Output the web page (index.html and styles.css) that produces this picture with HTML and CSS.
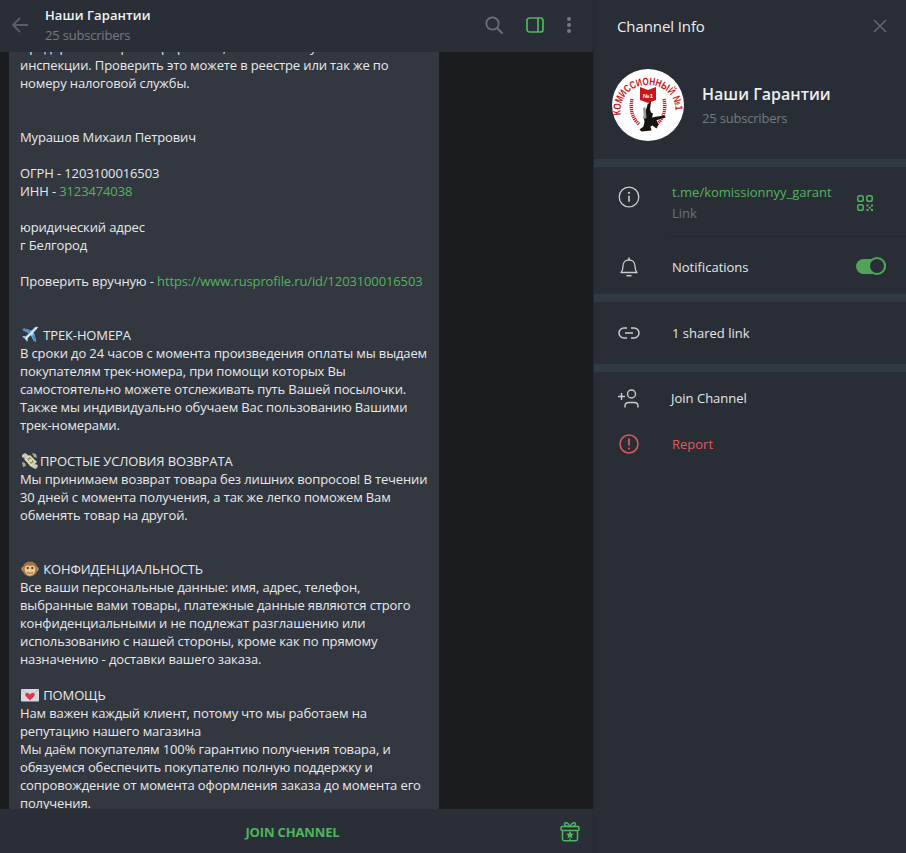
FILE: index.html
```html
<!DOCTYPE html>
<html lang="ru">
<head>
<meta charset="utf-8">
<title>Наши Гарантии</title>
<link rel="stylesheet" href="styles.css">
</head>
<body>
<div class="app">
  <main class="chat">
    <header class="chat-head">
      <svg class="back" width="20" height="20" viewBox="0 0 20 20"><path d="M18 10H3M10 3l-7 7 7 7" fill="none" stroke="#5a5f66" stroke-width="1.8"/></svg>
      <div class="chat-title">
        <div class="name">Наши Гарантии</div>
        <div class="subs">25 subscribers</div>
      </div>
      <div class="head-tools">
        <svg width="20" height="20" viewBox="0 0 20 20"><circle cx="8.5" cy="8.5" r="6.2" fill="none" stroke="#6f7379" stroke-width="1.7"/><path d="M13 13l5.5 5.5" stroke="#6f7379" stroke-width="1.8"/></svg>
        <svg width="18" height="16" viewBox="0 0 18 16"><rect x="1" y="1" width="16" height="14" rx="2.5" fill="none" stroke="#52b45f" stroke-width="1.7"/><path d="M12 1v14" stroke="#52b45f" stroke-width="1.7"/></svg>
        <svg width="6" height="18" viewBox="0 0 6 18"><circle cx="3" cy="3" r="2" fill="#767a80"/><circle cx="3" cy="9" r="2" fill="#767a80"/><circle cx="3" cy="15" r="2" fill="#767a80"/></svg>
      </div>
    </header>
    <div class="messages">
      <article class="bubble">
        Предприятие зарегистрировано, и состоит на учёте в налоговой<br>
        инспекции. Проверить это можете в реестре или так же по<br>
        номеру налоговой службы.<br>
        <br>
        <br>
        Мурашов Михаил Петрович<br>
        <br>
        ОГРН - 1203100016503<br>
        ИНН - <span class="link">3123474038</span><br>
        <br>
        юридический адрес<br>
        г Белгород<br>
        <br>
        Проверить вручную - <span class="link">https://www.rusprofile.ru/id/1203100016503</span><br>
        <br>
        <br>
        <svg class="emoji" viewBox="0 0 18 18"><path d="M16.6 1.2c-1-.8-2.4-.4-3.3.5L10.6 4.4 2.9 2.6 1.6 3.9 7.9 7.2 4.8 10.3 2.2 10 1.2 11l3 1.7 1.7 3 1-1-.3-2.6 3.1-3.1 3.3 6.3 1.3-1.3-1.8-7.7 2.7-2.7c.9-.9 1.2-2.3.4-3.4z" fill="#9fd0f2"/><path d="M16.6 1.2 4.5 13.3" stroke="#e9f5fc" stroke-width="1.2"/><path d="M10.6 4.4 2.9 2.6 1.6 3.9 7.9 7.2zM10.8 10.1l3.3 6.3 1.3-1.3-1.8-7.7z" fill="#4e90c4"/></svg> ТРЕК-НОМЕРА<br>
        В сроки до 24 часов с момента произведения оплаты мы выдаем<br>
        покупателям трек-номера, при помощи которых Вы<br>
        самостоятельно можете отслеживать путь Вашей посылочки.<br>
        Также мы индивидуально обучаем Вас пользованию Вашими<br>
        трек-номерами.<br>
        <br>
        <svg class="emoji" viewBox="0 0 18 18"><path d="M1 3l3-2 3 2 2 2-3 2-3-1-2-1zM17 14l-2 3-3-1-2-2 3-2 3 .5z" fill="#c9c9bb"/><path d="M3 7l6-4 7 7-6 5z" fill="#dcd8b4"/><path d="M6 7l3-2 4 5-3 2z" fill="#8f9a63"/><circle cx="9.500" cy="8.500" r="1.500" fill="#e8e4c4"/><path d="M1 10l3 1 1 3-3 1zM11 1l4 1 1 4-3-1z" fill="#a9a998"/></svg>ПРОСТЫЕ УСЛОВИЯ ВОЗВРАТА<br>
        Мы принимаем возврат товара без лишних вопросов! В течении<br>
        30 дней с момента получения, а так же легко поможем Вам<br>
        обменять товар на другой.<br>
        <br>
        <br>
        <svg class="emoji" viewBox="0 0 18 18"><circle cx="2.600" cy="9" r="2.200" fill="#d9a470"/><circle cx="15.400" cy="9" r="2.200" fill="#d9a470"/><circle cx="9" cy="9" r="7.600" fill="#a9713f"/><path d="M3.600 9c0-3 2-3.600 3-3.600.9 0 1.600.5 2.400.5s1.500-.5 2.400-.5c1 0 3 .6 3 3.600 0 4-3 6.500-5.400 6.500S3.600 13 3.600 9z" fill="#edc793"/><circle cx="6.700" cy="8" r="1.100" fill="#3a2515"/><circle cx="11.300" cy="8" r="1.100" fill="#3a2515"/><path d="M6 12.500c2 1 4 1 6 0" stroke="#8a5a32" fill="none"/></svg> КОНФИДЕНЦИАЛЬНОСТЬ<br>
        Все ваши персональные данные: имя, адрес, телефон,<br>
        выбранные вами товары, платежные данные являются строго<br>
        конфиденциальными и не подлежат разглашению или<br>
        использованию с нашей стороны, кроме как по прямому<br>
        назначению - доставки вашего заказа.<br>
        <br>
        <svg class="emoji" viewBox="0 0 18 18"><rect y="3" width="18" height="12.500" rx="1" fill="#d5d8de"/><path d="M0 3.500 9 10l9-6.500" fill="none" stroke="#aeb3bb" stroke-width=".8"/><path d="M9 14.500 4.800 10.200c-1.700-2 .9-4.700 2.800-3L9 8.400l1.400-1.200c1.900-1.700 4.500 1 2.800 3z" fill="#e0364a"/></svg> ПОМОЩЬ<br>
        Нам важен каждый клиент, потому что мы работаем на<br>
        репутацию нашего магазина<br>
        Мы даём покупателям 100% гарантию получения товара, и<br>
        обязуемся обеспечить покупателю полную поддержку и<br>
        сопровождение от момента оформления заказа до момента его<br>
        получения.
      </article>
    </div>
    <footer class="composer">
      <span class="join">JOIN CHANNEL</span>
      <svg class="gift" width="20" height="21" viewBox="0 0 20 21"><g fill="none" stroke="#52b45f" stroke-width="1.500"><rect x="1" y="5.500" width="18" height="4" rx="1.200"/><path d="M2.500 9.500v8.500a1.700 1.700 0 0 0 1.700 1.700h11.600a1.700 1.700 0 0 0 1.700-1.700V9.500"/><path d="M10 5.500C8 1 4.500 .8 4.500 3.200 4.500 5 7.500 5.500 10 5.500zM10 5.500c2-4.500 5.500-4.700 5.500-2.300 0 1.800-3 2.300-5.500 2.300z"/><path d="M10 17.500v2"/></g><path d="M10 9.800l1.200 2.600 2.800.3-2.100 1.900.6 2.800-2.500-1.400-2.500 1.400.6-2.800L6 12.700l2.800-.3z" fill="#52b45f"/></svg>
    </footer>
  </main>
  <aside class="info">
    <header class="info-head">
      <span>Channel Info</span>
      <svg width="14" height="14" viewBox="0 0 14 14"><path d="M1 1l12 12M13 1 1 13" stroke="#62676d" stroke-width="1.600"/></svg>
    </header>
    <section class="profile">
      <svg class="avatar" width="72" height="72" viewBox="0 0 72 72">
        <defs><path id="arc" d="M9 46C6 28 20 16 36 16S66 28 63 46"/></defs>
        <circle cx="36" cy="36" r="36" fill="#fff"/>
        <text class="arc-text"><textPath href="#arc" textLength="88" lengthAdjust="spacingAndGlyphs">КОМИССИОННЫЙ №1</textPath></text>
        <path d="M28 18l8 3 8-3v13l-8 3-8-3z" fill="#c8161d"/>
        <text class="book-text" x="36" y="29" text-anchor="middle">№1</text>
        <g fill="none" stroke="#c8161d" stroke-width="3.500" stroke-dasharray="1.200 .8"><path d="M20 30c-2 10 0 19 7 25"/><path d="M52 30c2 10 0 19-7 25"/></g>
        <path d="M38 32l1 .5-1 8 1 3 2 1-1 4 5-1 8-1 .5 2-7 2-2 1 2 4-2 4-4-3-2 1 1 4-10 1-2-2 4-3 1-5-1-4 1-6 2-3 1-4 2-2z" fill="#17130f"/>
        <path d="M31 39l2.500-1 1 11-2.500 1z" fill="#9a9a96"/>
      </svg>
      <div class="profile-text">
        <div class="profile-name">Наши Гарантии</div>
        <div class="subs">25 subscribers</div>
      </div>
    </section>
    <div class="gap"></div>
    <section class="group">
      <div class="row row-link">
        <svg class="row-icon" width="22" height="22" viewBox="0 0 22 22"><circle cx="11" cy="11" r="9.800" fill="none" stroke="#c9cccf" stroke-width="1.300"/><circle cx="11" cy="6.800" r="1.100" fill="#c9cccf"/><path d="M11 9.800v6" stroke="#c9cccf" stroke-width="1.600"/></svg>
        <div class="row-text">
          <div class="link">t.me/komissionnyy_garant</div>
          <div class="muted">Link</div>
        </div>
        <svg class="qr" width="16" height="16" viewBox="0 0 16 16"><g fill="none" stroke="#52b45f" stroke-width="1.500"><rect x=".8" y=".8" width="5.400" height="5.400" rx="1.800"/><rect x="9.800" y=".8" width="5.400" height="5.400" rx="1.800"/><rect x=".8" y="9.800" width="5.400" height="5.400" rx="1.800"/></g><g fill="#52b45f"><rect x="9.500" y="9.500" width="2" height="2"/><rect x="14" y="9.500" width="2" height="2"/><rect x="11.800" y="11.800" width="2" height="2"/><rect x="9.500" y="14" width="2" height="2"/><rect x="14" y="14" width="2" height="2"/></g></svg>
      </div>
      <div class="row row-notify">
        <svg class="row-icon" width="18" height="22" viewBox="0 0 18 22"><path d="M1 16.500c1.500-1.500 2-2.500 2-6.500 0-3.500 2.500-6 6-6s6 2.500 6 6c0 4 .5 5 2 6.500z" fill="none" stroke="#c9cccf" stroke-width="1.300" stroke-linejoin="round"/><path d="M9 1.500V4" stroke="#c9cccf" stroke-width="1.600"/><path d="M6.500 19.700h5" stroke="#c9cccf" stroke-width="1.500"/></svg>
        <div class="row-label">Notifications</div>
        <div class="toggle"><span class="knob"></span></div>
      </div>
    </section>
    <div class="gap"></div>
    <section class="group">
      <div class="row row-shared">
        <svg class="row-icon" width="22" height="12" viewBox="0 0 22 12"><g fill="none" stroke="#c9cccf" stroke-width="1.500"><path d="M9 1H6a5 5 0 0 0 0 10h3"/><path d="M13 1h3a5 5 0 0 1 0 10h-3"/><path d="M7 6h8"/></g></svg>
        <div class="row-label">1 shared link</div>
      </div>
    </section>
    <div class="gap"></div>
    <section class="group group-actions">
      <div class="row row-action">
        <svg class="row-icon" width="23" height="19" viewBox="0 0 23 19"><g fill="none" stroke="#c9cccf" stroke-width="1.400"><circle cx="14.500" cy="5" r="4"/><path d="M8 18.500v-1.500c0-2.500 2-3.500 4-3.500h5c2 0 4 1 4 3.500v1.500"/><path d="M1 7.500h7M4.500 4v7"/></g></svg>
        <div class="row-label">Join Channel</div>
      </div>
      <div class="row row-action danger">
        <svg class="row-icon" width="20" height="20" viewBox="0 0 20 20"><circle cx="10" cy="10" r="9" fill="none" stroke="#dd5b5e" stroke-width="1.500"/><path d="M10 4.500v7" stroke="#dd5b5e" stroke-width="1.800"/><circle cx="10" cy="14.500" r="1.100" fill="#dd5b5e"/></svg>
        <div class="row-label">Report</div>
      </div>
    </section>
  </aside>
</div>
</body>
</html>
```

FILE: styles.css
```css
* { box-sizing: border-box; }
html, body { margin: 0; height: 100%; overflow: hidden; }
body {
  background: #1b1c20;
  color: #e9eaec;
  font-family: "Open Sans", "Noto Sans", sans-serif;
  font-size: 13px;
  line-height: 18px;
}
.app { display: flex; width: 906px; height: 853px; }

.chat { width: 594px; height: 853px; display: flex; flex-direction: column; border-right: 1px solid #24282e; }
.chat-head {
  height: 52px; flex: none; display: flex; align-items: center;
  background: #2a2f37; padding: 0 21px 0 10px;
}
.back { flex: none; margin-top: -2px; }
.chat-title { margin-left: 15px; flex: 1; }
.name { font-size: 13px; font-weight: 600; line-height: 18px; color: #f1f2f3; margin-top: -2px; letter-spacing: .08px; }
.subs { color: #747a80; font-size: 13px; line-height: 18px; margin-top: 2px; letter-spacing: -.2px; }
.head-tools { display: flex; align-items: center; gap: 22px; margin-top: -2px; }

.messages { flex: 1; min-height: 0; overflow: hidden; padding-left: 9px; }
.bubble {
  width: 430px; background: #33373f; padding: 0 11px;
  margin-top: -14px; white-space: nowrap; color: #e7e9eb; letter-spacing: -.13px;
}
.emoji { width: 18px; height: 18px; vertical-align: -4px; margin: 0 1px; }
.link { color: #52b45f; }

.composer {
  height: 44px; flex: none; background: #2a2f37; padding: 2px 8px 0 0;
  display: flex; align-items: center; justify-content: center; position: relative;
}
.join { color: #52b45f; font-weight: 700; font-size: 13px; letter-spacing: -.15px; }
.gift { position: absolute; right: 13px; top: 12px; }

.info { flex: 1; background: #292e36; min-width: 0; }
.info-head {
  height: 52px; display: flex; align-items: center; justify-content: space-between;
  padding: 0 19px 0 23px; font-size: 15px; font-weight: 500; letter-spacing: -.1px; color: #eceeef;
}
.profile { height: 107px; display: flex; align-items: flex-start; padding: 17px 0 0 18px; }
.avatar { flex: none; }
.arc-text { font: 700 10.500px "Liberation Sans", sans-serif; fill: #c8161d; }
.book-text { font: 700 6px "Liberation Sans", sans-serif; fill: #fff; }
.profile-text { margin-left: 18px; padding-top: 14px; }
.profile-name { font-size: 16px; font-weight: 600; line-height: 22px; color: #eceeef; }
.profile-text .subs { margin-top: 4px; }
.gap { height: 8px; background: #2f3a42; }

.row { display: flex; align-items: center; position: relative; }
.row-icon { flex: none; }
.row-label, .row-text { position: absolute; left: 78px; color: #e4e6e8; }
.row-text { top: 16px; }
.muted { color: #6d7278; margin-top: 3px; }
.row-link { height: 70px; align-items: flex-start; }
.row-link .row-icon { margin: 19px 0 0 24px; }
.row-link::after { content: ""; position: absolute; left: 76px; right: 0; bottom: 0; height: 1px; background: #24282e; }
.qr { position: absolute; left: 263px; top: 28px; }
.row-notify { height: 57px; padding-top: 3px; }
.row-notify .row-icon { margin-left: 26px; }
.toggle {
  position: absolute; left: 262px; top: 22px; width: 30px; height: 15px;
  background: #4fa458; border-radius: 8px;
}
.knob {
  position: absolute; right: 0; top: -2px; width: 18px; height: 18px; border-radius: 50%;
  background: #292e36; border: 2px solid #4fa458;
}
.row-shared { height: 62px; }
.row-shared .row-icon { margin-left: 24px; }
.group-actions { padding-top: 3px; }
.row-action { height: 46px; }
.row-action .row-icon { margin-left: 23px; }
.row-action .row-label { left: 77px; }
.danger .row-icon { margin-left: 25px; }
.danger .row-label { left: 78px; color: #dd5b5e; }
```
